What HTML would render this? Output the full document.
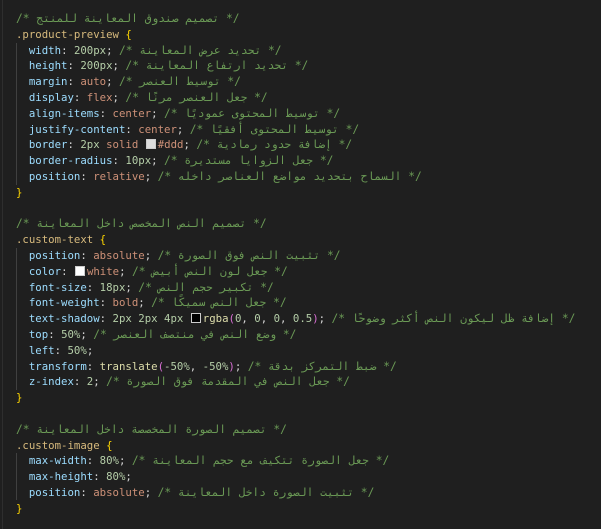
<!DOCTYPE html>
<html><head><meta charset="utf-8"><style>
html,body{margin:0;padding:0;background:#1f1f1f;width:601px;height:529px;overflow:hidden}
.ed{position:absolute;left:0;top:0;width:601px;height:529px}
.gl{position:absolute;left:2px;top:0;width:1px;height:529px;background:#2e2e2e}
.ig{position:absolute;left:16px;width:1px;background:#404040}
pre{position:absolute;left:16px;top:11px;margin:0;font-family:"DejaVu Sans Mono",monospace;font-size:10.7px;line-height:15.8px;color:#d4d4d4;white-space:pre}
.c{color:#6a9955;font-size:11.25px}.s{color:#d7ba7d}.p{color:#9cdcfe}.n{color:#b5cea8}.v{color:#ce9178}.b{color:#ffd700}.f{color:#dcdcaa}.pk{color:#da70d6}
.sw{display:inline-block;width:8px;height:8px;border:1px solid #ccc;margin:0 2px 0 1px;vertical-align:-1px}
</style></head><body><div class="ed"><div class="gl"></div>
<div class="ig" style="top:43px;height:142px"></div>
<div class="ig" style="top:248px;height:142px"></div>
<div class="ig" style="top:453px;height:47px"></div>
<pre><span class="c">/* تصميم صندوق المعاينة للمنتج */</span>
<span class="s">.product-preview</span> <span class="b">{</span>
  <span class="p">width</span>: <span class="n">200px</span>; <span class="c">/* تحديد عرض المعاينة */</span>
  <span class="p">height</span>: <span class="n">200px</span>; <span class="c">/* تحديد ارتفاع المعاينة */</span>
  <span class="p">margin</span>: <span class="v">auto</span>; <span class="c">/* توسيط العنصر */</span>
  <span class="p">display</span>: <span class="v">flex</span>; <span class="c">/* جعل العنصر مرنًا */</span>
  <span class="p">align-items</span>: <span class="v">center</span>; <span class="c">/* توسيط المحتوى عموديًا */</span>
  <span class="p">justify-content</span>: <span class="v">center</span>; <span class="c">/* توسيط المحتوى أفقيًا */</span>
  <span class="p">border</span>: <span class="n">2px</span> <span class="v">solid</span> <span class="sw" style="background:#ddd"></span><span class="v">#ddd</span>; <span class="c">/* إضافة حدود رمادية */</span>
  <span class="p">border-radius</span>: <span class="n">10px</span>; <span class="c">/* جعل الزوايا مستديرة */</span>
  <span class="p">position</span>: <span class="v">relative</span>; <span class="c">/* السماح بتحديد مواضع العناصر داخله */</span>
<span class="b">}</span>

<span class="c">/* تصميم النص المخصص داخل المعاينة */</span>
<span class="s">.custom-text</span> <span class="b">{</span>
  <span class="p">position</span>: <span class="v">absolute</span>; <span class="c">/* تثبيت النص فوق الصورة */</span>
  <span class="p">color</span>: <span class="sw" style="background:#fff"></span><span class="v">white</span>; <span class="c">/* جعل لون النص أبيض */</span>
  <span class="p">font-size</span>: <span class="n">18px</span>; <span class="c">/* تكبير حجم النص */</span>
  <span class="p">font-weight</span>: <span class="v">bold</span>; <span class="c">/* جعل النص سميكًا */</span>
  <span class="p">text-shadow</span>: <span class="n">2px</span> <span class="n">2px</span> <span class="n">4px</span> <span class="sw" style="background:#000"></span><span class="f">rgba</span><span class="pk">(</span><span class="n">0</span>, <span class="n">0</span>, <span class="n">0</span>, <span class="n">0.5</span><span class="pk">)</span>; <span class="c">/* إضافة ظل ليكون النص أكثر وضوحًا */</span>
  <span class="p">top</span>: <span class="n">50%</span>; <span class="c">/* وضع النص في منتصف العنصر */</span>
  <span class="p">left</span>: <span class="n">50%</span>;
  <span class="p">transform</span>: <span class="f">translate</span><span class="pk">(</span><span class="n">-50%</span>, <span class="n">-50%</span><span class="pk">)</span>; <span class="c">/* ضبط التمركز بدقة */</span>
  <span class="p">z-index</span>: <span class="n">2</span>; <span class="c">/* جعل النص في المقدمة فوق الصورة */</span>
<span class="b">}</span>

<span class="c">/* تصميم الصورة المخصصة داخل المعاينة */</span>
<span class="s">.custom-image</span> <span class="b">{</span>
  <span class="p">max-width</span>: <span class="n">80%</span>; <span class="c">/* جعل الصورة تتكيف مع حجم المعاينة */</span>
  <span class="p">max-height</span>: <span class="n">80%</span>;
  <span class="p">position</span>: <span class="v">absolute</span>; <span class="c">/* تثبيت الصورة داخل المعاينة */</span>
<span class="b">}</span></pre></div></body></html>
